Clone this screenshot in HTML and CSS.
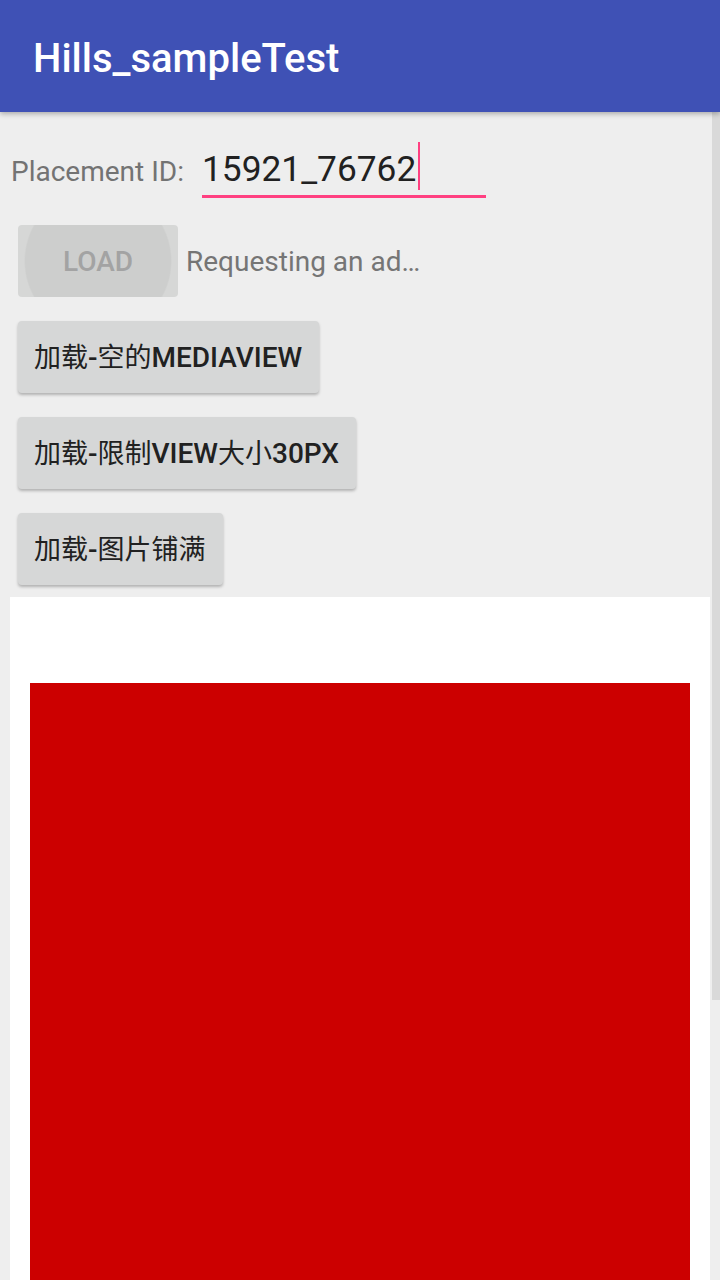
FILE: index.html
```html
<!DOCTYPE html>
<html>
<head>
<meta charset="utf-8">
<link rel="stylesheet" href="styles.css">
</head>
<body>
<div class="screen">
  <header class="appbar"><span class="title">Hills_sampleTest</span></header>
  <main class="content">
    <div class="id-row">
      <span class="label">Placement ID:</span>
      <div class="field"><span class="field-text">15921_76762</span><span class="cursor"></span></div>
    </div>
    <div class="load-row">
      <div class="load-btn"><span>LOAD</span></div>
      <span class="status">Requesting an ad…</span>
    </div>
    <div class="btn-list">
      <div class="btn"><span class="cjk">加载</span>-<span class="cjk">空的</span>MEDIAVIEW</div>
      <div class="btn"><span class="cjk">加载</span>-<span class="cjk">限制</span>VIEW<span class="cjk">大小</span>30PX</div>
      <div class="btn"><span class="cjk">加载</span>-<span class="cjk">图片铺满</span></div>
    </div>
    <div class="ad-area">
      <div class="ad-media"></div>
    </div>
  </main>
  <div class="scrollbar"></div>
</div>
</body>
</html>
```
FILE: styles.css
```css
html, body {
  margin: 0;
  padding: 0;
  height: 1280px;
  overflow: hidden;
}
body {
  background: #eeeeee;
  font-family: Roboto, "Noto Sans CJK SC", sans-serif;
}
.screen {
  position: relative;
  width: 720px;
  height: 1280px;
  overflow: hidden;
}
.appbar {
  position: relative;
  z-index: 2;
  box-sizing: border-box;
  height: 112px;
  padding: 5px 0 0 33px;
  display: flex;
  align-items: center;
  background: #3f51b5;
  box-shadow: 0 2px 5px rgba(0, 0, 0, 0.28);
}
.title {
  color: #ffffff;
  font-size: 40px;
  font-weight: 500;
}
.content {
  display: flex;
  flex-direction: column;
}
.id-row {
  display: flex;
  align-items: baseline;
  margin-top: 30px;
  padding-left: 11px;
}
.label {
  font-size: 28px;
  line-height: 28px;
  color: #737373;
}
.field {
  box-sizing: border-box;
  width: 284px;
  margin-left: 18px;
  padding-bottom: 5px;
  border-bottom: 3px solid #ff4081;
  font-size: 35.3px;
  line-height: 40px;
  color: #212121;
}
.cursor {
  display: inline-block;
  width: 2px;
  height: 48px;
  margin-left: 2px;
  vertical-align: -9px;
  background: #ff4081;
}
.load-row {
  display: flex;
  align-items: baseline;
  gap: 8px;
  margin-top: 27px;
  padding-left: 18px;
}
.load-btn {
  box-sizing: border-box;
  width: 160px;
  height: 72px;
  padding-top: 2px;
  display: flex;
  align-items: center;
  justify-content: center;
  border-radius: 4px;
  background: radial-gradient(circle 74px at 50% 50%, #cdcecd 98%, #d6d7d6 100%);
  font-size: 28px;
  line-height: 28px;
  font-weight: 500;
  color: #a3a3a3;
}
.status {
  font-size: 28px;
  line-height: 28px;
  color: #757575;
}
.btn-list {
  display: flex;
  flex-direction: column;
  align-items: flex-start;
  gap: 24px;
  margin-top: 24px;
  padding-left: 18px;
}
.btn {
  box-sizing: border-box;
  height: 72px;
  padding: 2px 17px 0 16px;
  display: flex;
  align-items: center;
  border-radius: 4px;
  background: #d6d7d7;
  box-shadow: 0 2px 3px rgba(0, 0, 0, 0.25);
  font-size: 28px;
  line-height: 28px;
  font-weight: 500;
  color: #212121;
  white-space: pre;
}
.cjk {
  font-weight: 400;
  font-size: 27px;
}
.ad-area {
  margin: 12px 10px 0 10px;
  padding: 86px 20px 0 20px;
  background: #ffffff;
}
.ad-media {
  height: 600px;
  background: #cc0000;
}
.scrollbar {
  position: absolute;
  top: 112px;
  right: 0;
  width: 8px;
  height: 888px;
  background: #d9d9d9;
  z-index: 1;
}
```
